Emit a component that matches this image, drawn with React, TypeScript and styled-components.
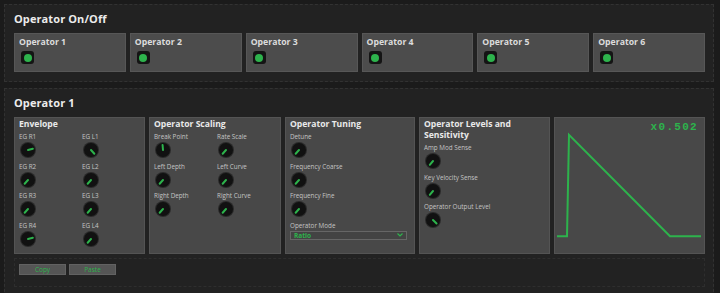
import React from "react";
import styled, { createGlobalStyle } from "styled-components";

const GlobalStyle = createGlobalStyle`
  html, body {
    margin: 0;
    padding: 0;
    background: #1b1b1b;
  }
  body {
    font-family: "Open Sans", "DejaVu Sans", sans-serif;
    color: #e6e6e6;
  }
`;

const GREEN = "#2db34c";

const Page = styled.div`
  display: flex;
  flex-direction: column;
  gap: 6px;
  padding: 4px 6px 0 4px;
  width: 720px;
  box-sizing: border-box;
`;

const Section = styled.section`
  background: #222;
  border: 1px dashed #323232;
  padding: 6px 8px 9px 9px;
`;

const SectionTitle = styled.h2`
  margin: 0 0 6px 0;
  font-size: 11px;
  line-height: 16px;
  font-weight: 700;
  color: #ececec;
  letter-spacing: 0.1px;
`;

const CardRow = styled.div`
  display: grid;
  grid-template-columns: repeat(6, 1fr);
  gap: 4px;
`;

const OperatorCard = styled.div`
  background: #4c4c4c;
  border: 1px solid #575757;
  height: 39px;
  box-sizing: border-box;
  padding: 2px 4px;
`;

const CardTitle = styled.div`
  font-size: 8.7px;
  line-height: 13px;
  font-weight: 700;
  color: #dcdcdc;
`;

const Led = styled.div`
  width: 13px;
  height: 13px;
  margin: 2px 0 0 2px;
  border-radius: 3px;
  background: #141414;
  display: flex;
  align-items: center;
  justify-content: center;

  &::after {
    content: "";
    width: 8px;
    height: 8px;
    border-radius: 50%;
    background: ${GREEN};
  }
`;

const PanelRow = styled.div`
  display: grid;
  grid-template-columns: 131px 132px 130px 131px 1fr;
  gap: 4px;
  height: 137px;
`;

const Panel = styled.div`
  background: #484848;
  border: 1px solid #545454;
  padding: 1px 4px;
  box-sizing: border-box;
  position: relative;
  overflow: hidden;
`;

const PanelTitle = styled.h3`
  margin: 0 0 2px 0;
  font-size: 8.6px;
  line-height: 11px;
  font-weight: 700;
  color: #eaeaea;
`;

const ControlGrid = styled.div<{ $cols: number }>`
  display: grid;
  grid-template-columns: repeat(${(p) => p.$cols}, 63px);
`;

const Control = styled.div`
  display: flex;
  flex-direction: column;
  align-items: flex-start;
  height: 29.5px;
`;

const Label = styled.div`
  font-size: 6.3px;
  line-height: 9px;
  color: #c4c4c4;
  white-space: nowrap;
`;

const KnobBody = styled.div`
  width: 14px;
  height: 14px;
  margin: 2px 0 0 2px;
  border-radius: 50%;
  background: #111;
  box-shadow: 0 0 0 1px #2a2a2a;
  position: relative;
`;

const Indicator = styled.div`
  position: absolute;
  left: 6px;
  top: 1px;
  width: 2px;
  height: 7px;
  border-radius: 1px;
  background: ${GREEN};
  transform-origin: 1px 6px;
`;

const Knob = ({ angle }: { angle: number }) => (
  <KnobBody>
    <Indicator style={{ transform: `rotate(${angle}deg)` }} />
  </KnobBody>
);

const KnobControl = ({ label, angle }: { label: string; angle: number }) => (
  <Control>
    <Label>{label}</Label>
    <Knob angle={angle} />
  </Control>
);

const SelectBox = styled.div`
  margin-top: 1px;
  width: 117px;
  height: 9px;
  box-sizing: border-box;
  border: 1px solid #666;
  background: #434343;
  display: flex;
  align-items: center;
  justify-content: space-between;
  padding: 0 3px;
  font-size: 6.5px;
  font-weight: 700;
  color: ${GREEN};
`;

const Ratio = styled.div`
  position: absolute;
  top: 3px;
  right: 6px;
  font-family: "Liberation Mono", "DejaVu Sans Mono", monospace;
  font-size: 11px;
  letter-spacing: 1.3px;
  font-weight: 700;
  color: ${GREEN};
`;

const Graph = styled.svg`
  position: absolute;
  inset: 0;
  width: 100%;
  height: 100%;
`;

const Toolbar = styled.div`
  margin-top: 4px;
  border: 1px dashed #2e2e2e;
  padding: 5px 4px 11px;
  display: flex;
  gap: 3px;
`;

const Button = styled.button`
  width: 47px;
  height: 11px;
  padding: 0;
  background: #555;
  border: 1px solid #626262;
  color: ${GREEN};
  font-family: "Open Sans", sans-serif;
  font-size: 6.5px;
  line-height: 9px;
`;

const envelope: [string, number][] = [
  ["EG R1", 76],
  ["EG L1", 138],
  ["EG R2", -138],
  ["EG L2", -138],
  ["EG R3", -138],
  ["EG L3", -138],
  ["EG R4", 76],
  ["EG L4", -138],
];

const scaling: [string, number][] = [
  ["Break Point", -5],
  ["Rate Scale", -138],
  ["Left Depth", -138],
  ["Left Curve", -138],
  ["Right Depth", -138],
  ["Right Curve", -138],
];

export default function App() {
  return (
    <>
      <GlobalStyle />
      <Page>
        <Section>
          <SectionTitle>Operator On/Off</SectionTitle>
          <CardRow>
            {[1, 2, 3, 4, 5, 6].map((n) => (
              <OperatorCard key={n}>
                <CardTitle>Operator {n}</CardTitle>
                <Led />
              </OperatorCard>
            ))}
          </CardRow>
        </Section>

        <Section>
          <SectionTitle>Operator 1</SectionTitle>
          <PanelRow>
            <Panel>
              <PanelTitle>Envelope</PanelTitle>
              <ControlGrid $cols={2}>
                {envelope.map(([l, a]) => (
                  <KnobControl key={l} label={l} angle={a} />
                ))}
              </ControlGrid>
            </Panel>

            <Panel>
              <PanelTitle>Operator Scaling</PanelTitle>
              <ControlGrid $cols={2}>
                {scaling.map(([l, a]) => (
                  <KnobControl key={l} label={l} angle={a} />
                ))}
              </ControlGrid>
            </Panel>

            <Panel>
              <PanelTitle>Operator Tuning</PanelTitle>
              <KnobControl label="Detune" angle={-138} />
              <KnobControl label="Frequency Coarse" angle={-138} />
              <KnobControl label="Frequency Fine" angle={-138} />
              <Label>Operator Mode</Label>
              <SelectBox>
                <span>Ratio</span>
                <svg width="6" height="4" viewBox="0 0 6 4">
                  <path d="M0.5 0.5 L3 3 L5.5 0.5" stroke={GREEN} strokeWidth="1.2" fill="none" />
                </svg>
              </SelectBox>
            </Panel>

            <Panel>
              <PanelTitle>
                Operator Levels and
                <br />
                Sensitivity
              </PanelTitle>
              <KnobControl label="Amp Mod Sense" angle={-140} />
              <KnobControl label="Key Velocity Sense" angle={-140} />
              <KnobControl label="Operator Output Level" angle={135} />
            </Panel>

            <Panel>
              <Graph viewBox="0 0 149 137" preserveAspectRatio="none">
                <polyline
                  points="2,120 12,120 14,17 115,120 146,120"
                  fill="none"
                  stroke={GREEN}
                  strokeWidth="2"
                />
              </Graph>
              <Ratio>x0.502</Ratio>
            </Panel>
          </PanelRow>

          <Toolbar>
            <Button>Copy</Button>
            <Button>Paste</Button>
          </Toolbar>
        </Section>
      </Page>
    </>
  );
}
